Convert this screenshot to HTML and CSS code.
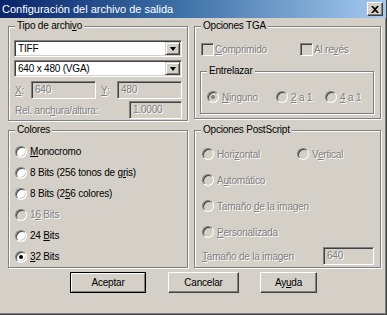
FILE: index.html
```html
<!DOCTYPE html>
<html lang="es">
<head>
<meta charset="utf-8">
<title>Configuración del archivo de salida</title>
<link rel="stylesheet" href="styles.css">
</head>
<body>
<div class="window">
  <div class="titlebar">
    <span class="title">Configuración del archivo de salida</span>
    <span class="close"><svg width="8" height="7" viewBox="0 0 8 7"><path d="M0 0h2l2 2 2-2h2L5 3.5 8 7H6L4 5 2 7H0l3-3.5z" fill="#000"/></svg></span>
  </div>
  <div class="groups">
    <div class="group g-tipo">
      <span class="glabel">Tipo de archi<u>v</u>o</span>
      <div class="combo c1"><span class="cval">TIFF</span><span class="dd"><i></i></span></div>
      <div class="combo c2"><span class="cval">640 x 480 (VGA)</span><span class="dd"><i></i></span></div>
      <div class="xy-row">
        <span class="lbl dis lx"><u>X</u>:</span>
        <span class="edit w65">640</span>
        <span class="lbl dis ly"><u>Y</u>:</span>
        <span class="edit w65">480</span>
      </div>
      <div class="rel-row">
        <span class="lbl dis">Rel. anc<u>h</u>ura/altura:</span>
        <span class="edit w53">1.0000</span>
      </div>
    </div>

    <div class="group g-tga">
      <span class="glabel">Opciones TGA</span>
      <div class="chk-row">
        <span class="opt dis"><span class="chk"></span><span class="t"><u>C</u>omprimido</span></span>
        <span class="opt dis"><span class="chk"></span><span class="t">Al re<u>v</u>és</span></span>
      </div>
      <div class="group g-entre">
        <span class="glabel">Entrelazar</span>
        <div class="entre-row">
          <span class="opt dis"><span class="rad on"></span><span class="t"><u>N</u>inguno</span></span>
          <span class="opt dis"><span class="rad"></span><span class="t"><u>2</u> a 1</span></span>
          <span class="opt dis"><span class="rad"></span><span class="t"><u>4</u> a 1</span></span>
        </div>
      </div>
    </div>

    <div class="group g-col">
      <span class="glabel">Colores</span>
      <div class="rrow"><span class="opt"><span class="rad"></span><span class="t"><u>M</u>onocromo</span></span></div>
      <div class="rrow"><span class="opt"><span class="rad"></span><span class="t">8 Bits (256 tonos de g<u>r</u>is)</span></span></div>
      <div class="rrow"><span class="opt"><span class="rad"></span><span class="t">8 Bits (2<u>5</u>6 colores)</span></span></div>
      <div class="rrow"><span class="opt dis"><span class="rad"></span><span class="t">1<u>6</u> Bits</span></span></div>
      <div class="rrow"><span class="opt"><span class="rad"></span><span class="t">24 <u>B</u>its</span></span></div>
      <div class="rrow"><span class="opt"><span class="rad on"></span><span class="t"><u>3</u>2 Bits</span></span></div>
    </div>

    <div class="group g-ps">
      <span class="glabel">Opciones PostScript</span>
      <div class="prow two">
        <span class="opt dis"><span class="rad"></span><span class="t">Hori<u>z</u>ontal</span></span>
        <span class="opt dis"><span class="rad"></span><span class="t">V<u>e</u>rtical</span></span>
      </div>
      <div class="prow"><span class="opt dis"><span class="rad"></span><span class="t">A<u>u</u>tomático</span></span></div>
      <div class="prow"><span class="opt dis"><span class="rad"></span><span class="t">Tamaño <u>d</u>e la imagen</span></span></div>
      <div class="prow"><span class="opt dis"><span class="rad"></span><span class="t"><u>P</u>ersonalizada</span></span></div>
      <div class="prow last">
        <span class="lbl dis"><u>T</u>amaño de la imagen</span>
        <span class="edit w51">640</span>
      </div>
    </div>
  </div>
  <div class="buttons">
    <span class="btn def"><span class="bin">Aceptar</span></span>
    <span class="btn w71">Cancelar</span>
    <span class="btn w57"><span class="t">Ay<u>u</u>da</span></span>
  </div>
</div>
</body>
</html>
```
FILE: styles.css
```css
* { box-sizing: border-box; }
html, body { margin: 0; padding: 0; }
body {
  background: #d4d0c8;
  font-family: "Liberation Sans", Arial, sans-serif;
  font-size: 10px;
  letter-spacing: -0.2px;
  color: #000;
}
u { text-decoration: underline; text-underline-offset: 1px; }
.t { white-space: pre; }

.window {
  width: 387px;
  height: 315px;
  border-right: 1px solid #404040;
  border-bottom: 1px solid #404040;
  box-shadow: inset -1px -1px 0 #808080;
  display: flex;
  flex-direction: column;
}

.titlebar {
  height: 18px;
  background: linear-gradient(to right, #0a246a 0%, #3a6ea5 45%, #a6caf0 100%);
  display: flex;
  align-items: center;
  justify-content: space-between;
  padding: 0 2px 0 2px;
  color: #fff;
  font-size: 11px;
  letter-spacing: 0;
}
.title { line-height: 18px; }
.close {
  width: 16px;
  height: 14px;
  margin-right: 1px;
  background: #d4d0c8;
  border-top: 1px solid #fff;
  border-left: 1px solid #fff;
  border-right: 1px solid #404040;
  border-bottom: 1px solid #404040;
  box-shadow: inset -1px -1px 0 #808080;
  display: flex;
  align-items: center;
  justify-content: center;
}

.groups {
  display: grid;
  grid-template-columns: 180px 187px;
  grid-template-rows: 95px 138px;
  column-gap: 6px;
  row-gap: 9px;
  margin: 8px 0 0 8px;
}

.group {
  border: 1px solid #808080;
  box-shadow: inset 1px 1px 0 #fff, 1px 1px 0 #fff;
  display: flex;
  flex-direction: column;
  align-items: flex-start;
}
.glabel {
  display: block;
  margin: -7px 0 0 6px;
  padding: 0 2px;
  line-height: 12px;
  height: 12px;
  background: #d4d0c8;
  white-space: nowrap;
}

/* Tipo de archivo */
.combo {
  width: 168px;
  height: 17px;
  margin-left: 5px;
  background: #fff;
  border-top: 1px solid #808080;
  border-left: 1px solid #808080;
  border-right: 1px solid #fff;
  border-bottom: 1px solid #fff;
  box-shadow: inset 1px 1px 0 #404040, inset -1px -1px 0 #d4d0c8;
  display: flex;
  align-items: center;
  justify-content: space-between;
  padding: 1px;
}
.c1 { margin-top: 8px; }
.c2 { margin-top: 3px; }
.cval { padding-left: 2px; line-height: 13px; }
.dd {
  width: 15px;
  height: 13px;
  background: #d4d0c8;
  border-top: 1px solid #d4d0c8;
  border-left: 1px solid #d4d0c8;
  border-right: 1px solid #404040;
  border-bottom: 1px solid #404040;
  box-shadow: inset 1px 1px 0 #fff, inset -1px -1px 0 #808080;
  display: flex;
  align-items: center;
  justify-content: center;
}
.dd i {
  width: 0;
  height: 0;
  border-left: 3.5px solid transparent;
  border-right: 3.5px solid transparent;
  border-top: 4px solid #000;
}

.edit {
  height: 18px;
  background: #d4d0c8;
  border-top: 1px solid #808080;
  border-left: 1px solid #808080;
  border-right: 1px solid #fff;
  border-bottom: 1px solid #fff;
  box-shadow: inset 1px 1px 0 #404040, inset -1px -1px 0 #d4d0c8;
  color: #808080;
  text-shadow: 1px 1px 0 #fff;
  line-height: 16px;
  padding-left: 3px;
}
.w65 { width: 65px; }
.w53 { width: 53px; }
.w51 { width: 51px; }

.xy-row {
  display: flex;
  align-items: center;
  margin-top: 4px;
}
.lx { width: 16px; margin-left: 6px; }
.ly { width: 16px; margin-left: 5px; }
.rel-row {
  display: flex;
  align-items: center;
  justify-content: space-between;
  width: 100%;
  margin-top: 2px;
  padding: 0 5px 0 6px;
}

.lbl { white-space: nowrap; }
.dis { color: #808080; text-shadow: 1px 1px 0 #fff; }

/* options */
.opt {
  display: flex;
  align-items: center;
  white-space: nowrap;
}
.rad {
  width: 12px;
  height: 12px;
  border-radius: 50%;
  background: #fff;
  border: 1px solid;
  border-color: #808080 #fff #fff #808080;
  box-shadow: inset 1px 1px 0 #404040, inset -1px -1px 0 #d4d0c8;
  margin-right: 3px;
  display: flex;
  align-items: center;
  justify-content: center;
  flex: none;
}
.rad.on::after {
  content: "";
  width: 4px;
  height: 4px;
  border-radius: 50%;
  background: #000;
}
.dis .rad { background: #d4d0c8; }
.dis .rad.on::after { background: #808080; }
.chk {
  width: 13px;
  height: 13px;
  background: #d4d0c8;
  border: 1px solid;
  border-color: #808080 #fff #fff #808080;
  box-shadow: inset 1px 1px 0 #404040, inset -1px -1px 0 #d4d0c8;
  margin-right: 1px;
  flex: none;
}

/* TGA */
.g-tga { height: 93px; }
.chk-row {
  display: grid;
  grid-template-columns: 99px auto;
  margin: 11px 0 0 6px;
  height: 13px;
}
.g-entre {
  width: 174px;
  height: 43px;
  margin: 15px 0 0 5px;
}
.entre-row {
  display: grid;
  grid-template-columns: 69px 49px auto;
  margin: 14px 0 0 6px;
  height: 12px;
}

/* Colores */
.g-col .glabel { margin-bottom: 5px; }
.rrow {
  height: 21px;
  display: flex;
  align-items: center;
  padding-left: 6px;
}

/* PostScript */
.g-ps .glabel { margin-bottom: 5px; }
.prow {
  height: 26px;
  width: 100%;
  display: flex;
  align-items: center;
  padding-left: 7px;
}
.prow.two { display: grid; grid-template-columns: 95px auto; align-items: center; }
.prow.last {
  height: 22px;
  justify-content: space-between;
  padding-right: 6px;
}

/* buttons */
.buttons {
  display: flex;
  gap: 22px;
  margin: 4px 0 0 70px;
}
.btn {
  height: 21px;
  display: flex;
  align-items: center;
  justify-content: center;
  background: #d4d0c8;
  border-top: 1px solid #fff;
  border-left: 1px solid #fff;
  border-right: 1px solid #404040;
  border-bottom: 1px solid #404040;
  box-shadow: inset -1px -1px 0 #808080;
  font-size: 10px;
}
.btn.def {
  width: 76px;
  border: 1px solid #000;
  box-shadow: none;
  padding: 0;
}
.bin {
  width: 100%;
  height: 100%;
  display: flex;
  align-items: center;
  justify-content: center;
  border-top: 1px solid #fff;
  border-left: 1px solid #fff;
  border-right: 1px solid #808080;
  border-bottom: 1px solid #808080;
}
.w71 { width: 71px; margin-left: 0; }
.w57 { width: 57px; margin-left: -1px; }
```
